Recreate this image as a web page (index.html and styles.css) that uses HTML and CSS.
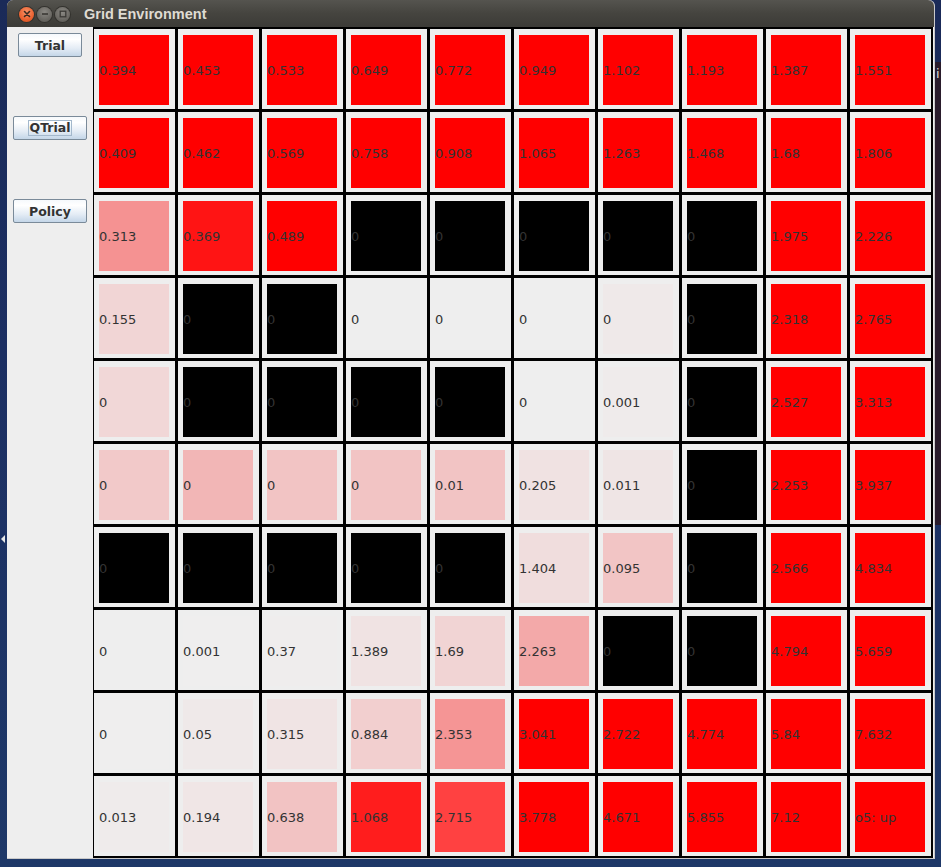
FILE: index.html
```html
<!DOCTYPE html>
<html>
<head>
<meta charset="utf-8">
<title>Grid Environment</title>
<link rel="stylesheet" href="styles.css">
</head>
<body>
<div class="desk-right"><span class="desk-text">i</span></div>
<div class="desk-arrow"></div>
<div class="window">
  <div class="titlebar">
    <div class="wbtns">
      <span class="wb close"><svg width="14" height="14" viewBox="0 0 14 14"><path d="M4.5 4.5 L9.5 9.5 M9.5 4.5 L4.5 9.5" stroke="#3a2a20" stroke-width="1.6" stroke-linecap="round"/></svg></span>
      <span class="wb"><svg width="14" height="14" viewBox="0 0 14 14"><path d="M4 7 H10" stroke="#3a3935" stroke-width="1.6"/></svg></span>
      <span class="wb"><svg width="14" height="14" viewBox="0 0 14 14"><rect x="4.2" y="4.2" width="5.6" height="5.6" fill="none" stroke="#3a3935" stroke-width="1.3"/></svg></span>
    </div>
    <div class="title">Grid Environment</div>
  </div>
  <div class="content">
    <div class="side">
      <button class="btn btn-trial">Trial</button>
      <button class="btn btn-wide"><span class="focus">QTrial</span></button>
      <button class="btn btn-wide">Policy</button>
    </div>
    <div class="grid">
      <div class="cell"><div class="sq red">0.394</div></div>
      <div class="cell"><div class="sq red">0.453</div></div>
      <div class="cell"><div class="sq red">0.533</div></div>
      <div class="cell"><div class="sq red">0.649</div></div>
      <div class="cell"><div class="sq red">0.772</div></div>
      <div class="cell"><div class="sq red">0.949</div></div>
      <div class="cell"><div class="sq red">1.102</div></div>
      <div class="cell"><div class="sq red">1.193</div></div>
      <div class="cell"><div class="sq red">1.387</div></div>
      <div class="cell"><div class="sq red">1.551</div></div>

      <div class="cell"><div class="sq red">0.409</div></div>
      <div class="cell"><div class="sq red">0.462</div></div>
      <div class="cell"><div class="sq red">0.569</div></div>
      <div class="cell"><div class="sq red">0.758</div></div>
      <div class="cell"><div class="sq red">0.908</div></div>
      <div class="cell"><div class="sq red">1.065</div></div>
      <div class="cell"><div class="sq red">1.263</div></div>
      <div class="cell"><div class="sq red">1.468</div></div>
      <div class="cell"><div class="sq red">1.68</div></div>
      <div class="cell"><div class="sq red">1.806</div></div>

      <div class="cell"><div class="sq" style="background:#f59292">0.313</div></div>
      <div class="cell"><div class="sq" style="background:#ff1414">0.369</div></div>
      <div class="cell"><div class="sq red">0.489</div></div>
      <div class="cell"><div class="sq wall">0</div></div>
      <div class="cell"><div class="sq wall">0</div></div>
      <div class="cell"><div class="sq wall">0</div></div>
      <div class="cell"><div class="sq wall">0</div></div>
      <div class="cell"><div class="sq wall">0</div></div>
      <div class="cell"><div class="sq red">1.975</div></div>
      <div class="cell"><div class="sq red">2.226</div></div>

      <div class="cell"><div class="sq" style="background:#f1d5d5">0.155</div></div>
      <div class="cell"><div class="sq wall">0</div></div>
      <div class="cell"><div class="sq wall">0</div></div>
      <div class="cell"><div class="sq">0</div></div>
      <div class="cell"><div class="sq">0</div></div>
      <div class="cell"><div class="sq">0</div></div>
      <div class="cell"><div class="sq" style="background:#efe9e9">0</div></div>
      <div class="cell"><div class="sq wall">0</div></div>
      <div class="cell"><div class="sq red">2.318</div></div>
      <div class="cell"><div class="sq red">2.765</div></div>

      <div class="cell"><div class="sq" style="background:#f1d7d7">0</div></div>
      <div class="cell"><div class="sq wall">0</div></div>
      <div class="cell"><div class="sq wall">0</div></div>
      <div class="cell"><div class="sq wall">0</div></div>
      <div class="cell"><div class="sq wall">0</div></div>
      <div class="cell"><div class="sq">0</div></div>
      <div class="cell"><div class="sq" style="background:#efebeb">0.001</div></div>
      <div class="cell"><div class="sq wall">0</div></div>
      <div class="cell"><div class="sq red">2.527</div></div>
      <div class="cell"><div class="sq red">3.313</div></div>

      <div class="cell"><div class="sq" style="background:#f2c9c9">0</div></div>
      <div class="cell"><div class="sq" style="background:#f2b6b6">0</div></div>
      <div class="cell"><div class="sq" style="background:#f2c4c4">0</div></div>
      <div class="cell"><div class="sq" style="background:#f2c4c4">0</div></div>
      <div class="cell"><div class="sq" style="background:#f2c4c4">0.01</div></div>
      <div class="cell"><div class="sq" style="background:#f0e2e2">0.205</div></div>
      <div class="cell"><div class="sq" style="background:#efe5e5">0.011</div></div>
      <div class="cell"><div class="sq wall">0</div></div>
      <div class="cell"><div class="sq red">2.253</div></div>
      <div class="cell"><div class="sq red">3.937</div></div>

      <div class="cell"><div class="sq wall">0</div></div>
      <div class="cell"><div class="sq wall">0</div></div>
      <div class="cell"><div class="sq wall">0</div></div>
      <div class="cell"><div class="sq wall">0</div></div>
      <div class="cell"><div class="sq wall">0</div></div>
      <div class="cell"><div class="sq" style="background:#f0dddd">1.404</div></div>
      <div class="cell"><div class="sq" style="background:#f2c5c5">0.095</div></div>
      <div class="cell"><div class="sq wall">0</div></div>
      <div class="cell"><div class="sq red">2.566</div></div>
      <div class="cell"><div class="sq red">4.834</div></div>

      <div class="cell"><div class="sq">0</div></div>
      <div class="cell"><div class="sq" style="background:#efeeee">0.001</div></div>
      <div class="cell"><div class="sq" style="background:#efeded">0.37</div></div>
      <div class="cell"><div class="sq" style="background:#f0e3e3">1.389</div></div>
      <div class="cell"><div class="sq" style="background:#f1d4d4">1.69</div></div>
      <div class="cell"><div class="sq" style="background:#f3a9a9">2.263</div></div>
      <div class="cell"><div class="sq wall">0</div></div>
      <div class="cell"><div class="sq wall">0</div></div>
      <div class="cell"><div class="sq red">4.794</div></div>
      <div class="cell"><div class="sq red">5.659</div></div>

      <div class="cell"><div class="sq" style="background:#efeeee">0</div></div>
      <div class="cell"><div class="sq" style="background:#efe9e9">0.05</div></div>
      <div class="cell"><div class="sq" style="background:#f0e4e4">0.315</div></div>
      <div class="cell"><div class="sq" style="background:#f2cfcf">0.884</div></div>
      <div class="cell"><div class="sq" style="background:#f59595">2.353</div></div>
      <div class="cell"><div class="sq red">3.041</div></div>
      <div class="cell"><div class="sq red">2.722</div></div>
      <div class="cell"><div class="sq red">4.774</div></div>
      <div class="cell"><div class="sq red">5.84</div></div>
      <div class="cell"><div class="sq red">7.632</div></div>

      <div class="cell"><div class="sq" style="background:#efebeb">0.013</div></div>
      <div class="cell"><div class="sq" style="background:#f0e6e6">0.194</div></div>
      <div class="cell"><div class="sq" style="background:#f2c3c3">0.638</div></div>
      <div class="cell"><div class="sq" style="background:#ff1d1d">1.068</div></div>
      <div class="cell"><div class="sq" style="background:#ff4141">2.715</div></div>
      <div class="cell"><div class="sq red">3.778</div></div>
      <div class="cell"><div class="sq red">4.671</div></div>
      <div class="cell"><div class="sq red">5.855</div></div>
      <div class="cell"><div class="sq red">7.12</div></div>
      <div class="cell"><div class="sq red">o5: up</div></div>
    </div>
  </div>
</div>
</body>
</html>
```
FILE: styles.css
```css
html, body {
  margin: 0;
  padding: 0;
}
body {
  width: 941px;
  height: 867px;
  overflow: hidden;
  position: relative;
  background: linear-gradient(to bottom, #1a2a58 0%, #1c2f62 40%, #1e3868 100%);
  font-family: "DejaVu Sans", sans-serif;
}
.desk-right {
  position: absolute;
  left: 935px;
  top: 62px;
  width: 6px;
  height: 463px;
  background: #2a1c2c;
  overflow: hidden;
}
.desk-text {
  position: absolute;
  left: 1px;
  top: 4px;
  color: #d8d8d8;
  font-size: 13px;
}
.desk-arrow {
  position: absolute;
  left: 1px;
  top: 535px;
  width: 0;
  height: 0;
  border-top: 4px solid transparent;
  border-bottom: 4px solid transparent;
  border-right: 4px solid #e8e8e8;
}
.window {
  position: absolute;
  left: 7px;
  top: 0;
  width: 927px;
  border-right: 1px solid #c9c9c9;
  border-bottom: 1px solid #c9c9c9;
  background: #eeeeee;
  border-radius: 6px 6px 0 0;
}
.titlebar {
  height: 27px;
  display: flex;
  align-items: center;
  background: linear-gradient(to bottom, #55544f 0%, #45443f 50%, #3c3b37 100%);
  border-radius: 6px 6px 0 0;
}
.wbtns {
  display: flex;
  gap: 3px;
  margin-left: 12px;
  margin-top: 1px;
}
.wb {
  width: 15px;
  height: 15px;
  border-radius: 50%;
  background: radial-gradient(circle at 50% 35%, #8a8883 0%, #6a6863 60%, #54534e 100%);
  display: flex;
  align-items: center;
  justify-content: center;
  box-shadow: 0 0 0 1px #33322e;
}
.wb svg { display: block; }
.wb.close {
  background: radial-gradient(circle at 50% 35%, #f7946a 0%, #ec6534 55%, #d24a17 100%);
}
.title {
  margin-left: 14px;
  margin-top: 1px;
  color: #dfdbd2;
  font-family: "Liberation Sans", Arial, sans-serif;
  font-weight: bold;
  font-size: 14.5px;
}
.content {
  display: flex;
}
.side {
  width: 86px;
  display: flex;
  flex-direction: column;
  align-items: center;
  padding-top: 6px;
  gap: 59px;
  background: #eeeeee;
}
.btn {
  height: 24px;
  padding: 0;
  border: 1px solid #7a8a99;
  border-radius: 2px;
  background: linear-gradient(to bottom, #f6f9fc 0%, #ffffff 25%, #e4ecf5 65%, #c4d6e8 100%);
  color: #333333;
  font-family: "DejaVu Sans", sans-serif;
  font-weight: bold;
  font-size: 12.5px;
  display: flex;
  align-items: center;
  justify-content: center;
}
.btn-trial { width: 64px; }
.btn-wide { width: 74px; }
.focus {
  border: 1px solid #a3b8cc;
  padding: 0 1px;
  line-height: 14px;
}
.grid {
  display: grid;
  grid-template-columns: repeat(10, 81px);
  grid-template-rows: repeat(10, 80px);
  gap: 3px;
  padding: 2px 2px 2px 1px;
  background: #000000;
}
.cell {
  background: #eeeeee;
  padding: 6px 6px 4px 5px;
}
.sq {
  width: 70px;
  height: 70px;
  display: flex;
  align-items: center;
  font-family: "DejaVu Sans", sans-serif;
  font-size: 13px;
  color: #333333;
  white-space: nowrap;
  background: #eeeeee;
}
.red { background: #ff0000; }
.wall { background: #000000; }
```
